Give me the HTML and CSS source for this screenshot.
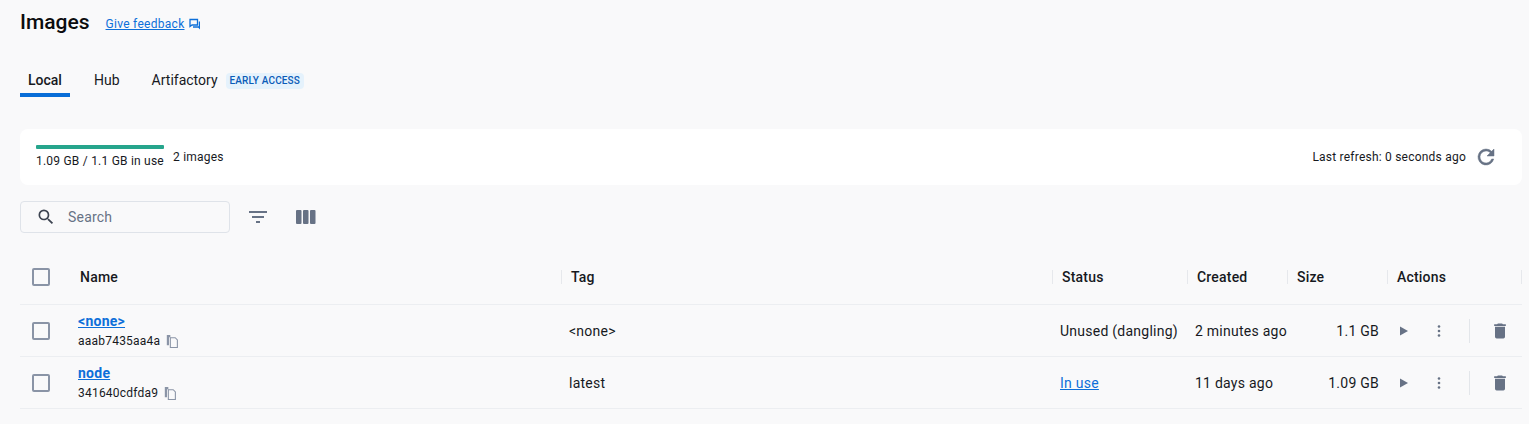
FILE: index.html
```html
<!DOCTYPE html>
<html>
<head>
    <title>Images</title>
    <link rel="stylesheet" href="styles.css">
</head>
<body>
    <header class="page-head">
        <h1>Images</h1>
        <a class="feedback" href="#">Give feedback</a>
        <svg class="feedback-icon" viewBox="0 0 12 12" width="12" height="12"><path d="M1 1.500h7.500v5.500H3L1 8.500z" fill="none" stroke="#0d6fd9" stroke-width="1.300"/><path d="M9.800 3.500H11v8L9.300 9.800H4V8.300h5.800z" fill="#0d6fd9"/></svg>
    </header>

    <nav class="tabs">
        <a class="tab active" href="#">Local</a>
        <a class="tab" href="#">Hub</a>
        <a class="tab tab-last" href="#">Artifactory</a>
        <span class="badge">EARLY ACCESS</span>
    </nav>

    <section class="summary">
        <div class="usage">
            <div class="usage-bar"></div>
            <div>1.09 GB / 1.1 GB in use</div>
        </div>
        <div class="count">2 images</div>
        <div class="refresh">Last refresh: 0 seconds ago</div>
        <svg class="refresh-icon" viewBox="0 0 24 24" width="24" height="24"><path d="M17.650 6.350A7.960 7.960 0 0 0 12 4a8 8 0 1 0 7.730 10h-2.080A6 6 0 1 1 12 6c1.660 0 3.140.690 4.220 1.780L13 11h7V4z" fill="#677285" stroke="#677285" stroke-width="0.500"/></svg>
    </section>

    <div class="toolbar">
        <div class="search">
            <svg viewBox="0 0 24 24" width="20" height="20"><path d="M15.500 14h-.790l-.280-.270A6.470 6.470 0 0 0 16 9.500 6.500 6.500 0 1 0 9.500 16c1.610 0 3.090-.590 4.230-1.570l.270.280v.790l5 4.990L20.490 19zm-6 0C7.010 14 5 11.990 5 9.500S7.010 5 9.500 5 14 7.010 14 9.500 11.990 14 9.500 14" fill="#3c4350"/></svg>
            <span>Search</span>
        </div>
        <svg class="filter-icon" viewBox="0 0 24 24" width="24" height="24"><path d="M10 18h4v-2h-4zM3 6v2h18V6zm3 7h12v-2H6z" fill="#677285"/></svg>
        <svg class="columns-icon" viewBox="0 0 20 16" width="20" height="16"><rect x="0" y="1" width="5.500" height="14" rx="1" fill="#677285"/><rect x="7" y="1" width="5.500" height="14" rx="1" fill="#677285"/><rect x="14" y="1" width="5.500" height="14" rx="1" fill="#677285"/></svg>
    </div>

    <table class="images">
        <colgroup>
            <col class="col-check"><col class="col-name"><col class="col-tag"><col class="col-status"><col class="col-created"><col class="col-size"><col class="col-actions">
        </colgroup>
        <thead>
            <tr>
                <th class="check"><span class="box"></span></th>
                <th class="first-head">Name</th>
                <th>Tag</th>
                <th>Status</th>
                <th>Created</th>
                <th>Size</th>
                <th>Actions</th>
            </tr>
        </thead>
        <tbody>
            <tr>
                <td class="check"><span class="box"></span></td>
                <td>
                    <a class="image-name" href="#">&lt;none&gt;</a>
                    <div class="image-id">aaab7435aa4a
                        <svg viewBox="0 0 24 24" width="13" height="13"><path d="M7 1H2.500v17H4.500V3H7zM8 5h9l4 4v14H8z" fill="none" stroke="#8a94a6" stroke-width="2"/></svg>
                    </div>
                </td>
                <td>&lt;none&gt;</td>
                <td>Unused (dangling)</td>
                <td>2 minutes ago</td>
                <td class="size">1.1 GB</td>
                <td>
                    <div class="actions">
                        <svg class="play" viewBox="0 0 10 12" width="10" height="12"><path d="M1 1.500v9L9 6z" fill="#677285"/></svg>
                        <svg class="more" viewBox="0 0 4 14" width="4" height="14"><circle cx="2" cy="2.500" r="1.300" fill="#677285"/><circle cx="2" cy="7" r="1.300" fill="#677285"/><circle cx="2" cy="11.500" r="1.300" fill="#677285"/></svg>
                        <span class="divider"></span>
                        <svg class="trash" viewBox="0 0 24 24" width="20" height="20"><path d="M6 19a2 2 0 0 0 2 2h8a2 2 0 0 0 2-2V7H6zM19 4h-3.500l-1-1h-5l-1 1H5v2h14z" fill="#677285"/></svg>
                    </div>
                </td>
            </tr>
            <tr>
                <td class="check"><span class="box"></span></td>
                <td>
                    <a class="image-name" href="#">node</a>
                    <div class="image-id">341640cdfda9
                        <svg viewBox="0 0 24 24" width="13" height="13"><path d="M7 1H2.500v17H4.500V3H7zM8 5h9l4 4v14H8z" fill="none" stroke="#8a94a6" stroke-width="2"/></svg>
                    </div>
                </td>
                <td>latest</td>
                <td><a class="status-link" href="#">In use</a></td>
                <td>11 days ago</td>
                <td class="size">1.09 GB</td>
                <td>
                    <div class="actions">
                        <svg class="play" viewBox="0 0 10 12" width="10" height="12"><path d="M1 1.500v9L9 6z" fill="#677285"/></svg>
                        <svg class="more" viewBox="0 0 4 14" width="4" height="14"><circle cx="2" cy="2.500" r="1.300" fill="#677285"/><circle cx="2" cy="7" r="1.300" fill="#677285"/><circle cx="2" cy="11.500" r="1.300" fill="#677285"/></svg>
                        <span class="divider"></span>
                        <svg class="trash" viewBox="0 0 24 24" width="20" height="20"><path d="M6 19a2 2 0 0 0 2 2h8a2 2 0 0 0 2-2V7H6zM19 4h-3.500l-1-1h-5l-1 1H5v2h14z" fill="#677285"/></svg>
                    </div>
                </td>
            </tr>
        </tbody>
    </table>
</body>
</html>
```

FILE: styles.css
```css
* {
    box-sizing: border-box;
}
body {
    margin: 0;
    padding: 0 7px 0 20px;
    height: 424px;
    overflow: hidden;
    background-color: #f9f9fa;
    color: #17191e;
    font-family: Roboto, "Liberation Sans", sans-serif;
    font-size: 14px;
}
a {
    color: #0d6fd9;
}

.page-head {
    display: flex;
    align-items: center;
    height: 43px;
}
h1 {
    margin: 0 16px 0 0;
    color: #0b0c0e;
    font-size: 21px;
    font-weight: 500;
}
.feedback {
    padding-top: 5px;
    font-size: 12px;
    letter-spacing: 0.28px;
}
.feedback-icon {
    margin: 5px 0 0 4px;
}

.tabs {
    display: flex;
    align-items: center;
    height: 35px;
    margin-top: 19px;
}
.tab {
    height: 35px;
    padding: 10px 8px 0;
    margin-right: 16px;
    color: #17191e;
    font-size: 14px;
    text-decoration: none;
}
.tab.active {
    width: 50px;
    padding-left: 8px;
    margin-right: 16px;
    font-weight: 500;
    border-bottom: 4px solid #086dd7;
}
.tab-last {
    margin-right: 0;
}
.badge {
    margin-top: 3px;
    padding: 3px 4px;
    border-radius: 4px;
    background-color: #e5f2fc;
    color: #0b5cb8;
    font-size: 10px;
    font-weight: 500;
    line-height: 10px;
    letter-spacing: 0.15px;
}

.summary {
    display: flex;
    align-items: center;
    height: 56px;
    margin-top: 32px;
    padding: 0 24px 0 16px;
    border-radius: 8px;
    background-color: #fff;
    font-size: 12px;
    letter-spacing: 0.22px;
}
.usage {
    width: 128px;
    padding-bottom: 1px;
    white-space: nowrap;
}
.usage-bar {
    height: 4px;
    margin-bottom: 5px;
    border-radius: 1px;
    background-color: #26a58c;
}
.count {
    margin-left: 9px;
}
.refresh {
    margin-left: auto;
}
.refresh-icon {
    margin-left: 8px;
}

.toolbar {
    display: flex;
    align-items: center;
    margin-top: 16px;
    height: 32px;
}
.search {
    display: flex;
    align-items: center;
    gap: 12px;
    width: 210px;
    height: 32px;
    padding-left: 15px;
    border: 1px solid #dfe3e9;
    border-radius: 4px;
    color: #677285;
    letter-spacing: 0.2px;
}
.filter-icon {
    margin-left: 16px;
}
.columns-icon {
    margin-left: 26px;
}

.images {
    width: 1502px;
    margin-top: 17px;
    border-collapse: collapse;
    table-layout: fixed;
}
.col-check { width: 50px; }
.col-name { width: 491px; }
.col-tag { width: 491px; }
.col-status { width: 135px; }
.col-created { width: 100px; }
.col-size { width: 100px; }
.col-actions { width: 135px; }

th {
    height: 54px;
    padding: 1px 0 0 10px;
    font-size: 14px;
    font-weight: 500;
    text-align: left;
    letter-spacing: 0.2px;
    background-image: linear-gradient(#e6e8ec, #e6e8ec);
    background-size: 1px 14px;
    background-position: left center;
    background-repeat: no-repeat;
}
th.check, th.first-head {
    background-image: none;
}
th:last-child {
    background-image: linear-gradient(#e6e8ec, #e6e8ec), linear-gradient(#e6e8ec, #e6e8ec);
    background-size: 1px 14px, 1px 14px;
    background-position: left center, right center;
    background-repeat: no-repeat;
}
td {
    height: 52px;
    padding: 2px 0 0 8px;
    font-size: 14px;
    letter-spacing: 0.25px;
    border-top: 1px solid #eceef1;
    border-bottom: 1px solid #eceef1;
}
th.check {
    padding: 0 0 0 12px;
}
td.check {
    padding: 2px 0 0 12px;
}
.box {
    display: block;
    width: 18px;
    height: 18px;
    border: 2px solid #8a94a6;
    border-radius: 2px;
}
.image-name {
    display: block;
    font-weight: 700;
    font-size: 14px;
    line-height: 16px;
}
.image-id {
    margin-top: 4px;
    font-size: 12px;
    line-height: 16px;
    letter-spacing: 0.22px;
}
.image-id svg {
    margin-left: 3px;
    vertical-align: -3px;
}
.size {
    padding: 2px 8px 0 0;
    text-align: right;
}
.actions {
    display: flex;
    align-items: center;
}
.play {
    margin-left: 4px;
}
.more {
    margin-left: 28px;
}
.divider {
    width: 1px;
    height: 24px;
    margin-left: 28px;
    background-color: #e3e6ea;
}
.trash {
    margin-left: 20px;
}
```
